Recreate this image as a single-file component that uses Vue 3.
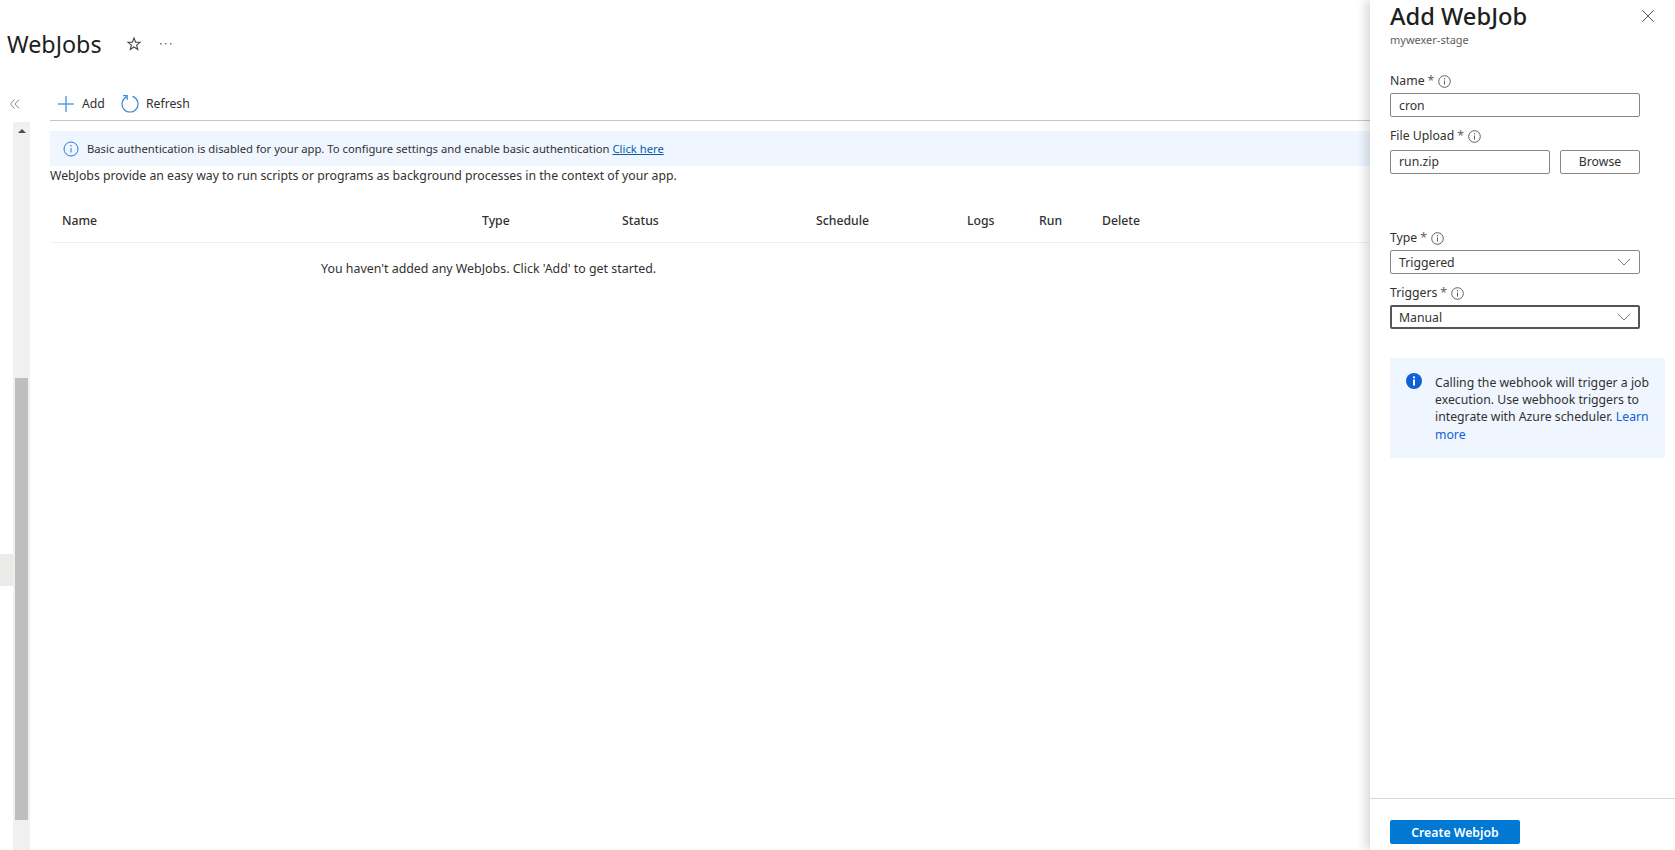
<script setup>
const columns = [
  { label: 'Name', width: '420px' },
  { label: 'Type', width: '140px' },
  { label: 'Status', width: '194px' },
  { label: 'Schedule', width: '151px' },
  { label: 'Logs', width: '72px' },
  { label: 'Run', width: '63px' },
  { label: 'Delete', width: '80px' }
]
</script>

<template>
  <div class="page">
    <div class="main">
      <header class="blade-head">
        <h1>WebJobs</h1>
        <svg class="star" width="16" height="16" viewBox="0 0 16 16" aria-hidden="true">
          <path d="M8 2l1.6 4.1 4.4.2-3.4 2.8 1.2 4.3L8 11l-3.8 2.4 1.2-4.3L2 6.3l4.4-.2z" fill="none" stroke="#444" stroke-width="1.1" />
        </svg>
        <svg class="dots" width="12" height="2" viewBox="0 0 12 2" aria-hidden="true">
          <path d="M0 0h1.500v1.500H0zM5 0h1.500v1.500H5zM10 0h1.500v1.500H10z" fill="#777" />
        </svg>
      </header>

      <div class="blade-body">
        <aside class="side">
          <div class="collapse">
            <svg width="12" height="12" viewBox="0 0 12 12" aria-hidden="true">
              <path d="M5.5 1.5L1.5 6l4 4.500M10 1.500L6 6l4 4.500" fill="none" stroke="#8a8886" stroke-width="1" />
            </svg>
          </div>
          <div class="side-row">
            <div class="side-nav"><div class="nav-selected"></div></div>
            <div class="scrollbar">
              <span class="arrow"></span>
              <div class="thumb"></div>
            </div>
          </div>
        </aside>

        <section class="content">
          <div class="toolbar">
            <button class="tool">
              <svg width="18" height="18" viewBox="0 0 18 18" aria-hidden="true">
                <path d="M9 1v16M1 9h16" stroke="#5a9fe0" stroke-width="1.500" fill="none" />
              </svg>
              Add
            </button>
            <button class="tool">
              <svg width="18" height="18" viewBox="0 0 18 18" aria-hidden="true">
                <path d="M11.500 1.400A8 8 0 1 1 6 1.600" stroke="#3f8bd6" stroke-width="1.200" fill="none" />
                <path d="M2 .7H6.200V5" stroke="#3f8bd6" stroke-width="1.200" fill="none" />
              </svg>
              Refresh
            </button>
          </div>

          <div class="banner">
            <svg width="16" height="16" viewBox="0 0 16 16" aria-hidden="true">
              <circle cx="8" cy="8" r="7" fill="none" stroke="#2f77d6" stroke-width="1" />
              <path d="M8 7v4.500" stroke="#2f77d6" stroke-width="1" />
              <circle cx="8" cy="4.800" r=".8" fill="#2f77d6" />
            </svg>
            <span>Basic authentication is disabled for your app. To configure settings and enable basic authentication <a href="#">Click here</a></span>
          </div>

          <p class="intro">WebJobs provide an easy way to run scripts or programs as background processes in the context of your app.</p>

          <div class="table-head">
            <span v-for="col in columns" :key="col.label" class="th" :style="{ width: col.width }">{{ col.label }}</span>
          </div>
          <p class="empty">You haven't added any WebJobs. Click 'Add' to get started.</p>
        </section>
      </div>
    </div>

    <aside class="panel">
      <div class="panel-body">
        <div class="panel-title">
          <h2>Add WebJob</h2>
          <svg class="close" width="14" height="14" viewBox="0 0 14 14" aria-hidden="true">
            <path d="M1 1l12 12M13 1L1 13" stroke="#555" stroke-width="1" fill="none" />
          </svg>
        </div>
        <div class="subtitle">mywexer-stage</div>

        <label class="lab lab-name">Name <span class="req">*</span>
          <svg class="tip" width="13" height="13" viewBox="0 0 13 13" aria-hidden="true">
            <circle cx="6.500" cy="6.500" r="5.800" fill="none" stroke="#605e5c" />
            <path d="M6.500 5.500v4" stroke="#605e5c" /><circle cx="6.500" cy="3.700" r=".7" fill="#605e5c" />
          </svg>
        </label>
        <div class="box">cron</div>

        <label class="lab lab-file">File Upload <span class="req">*</span>
          <svg class="tip" width="13" height="13" viewBox="0 0 13 13" aria-hidden="true">
            <circle cx="6.500" cy="6.500" r="5.800" fill="none" stroke="#605e5c" />
            <path d="M6.500 5.500v4" stroke="#605e5c" /><circle cx="6.500" cy="3.700" r=".7" fill="#605e5c" />
          </svg>
        </label>
        <div class="file-row">
          <div class="box file-name">run.zip</div>
          <button class="browse">Browse</button>
        </div>

        <label class="lab lab-type">Type <span class="req">*</span>
          <svg class="tip" width="13" height="13" viewBox="0 0 13 13" aria-hidden="true">
            <circle cx="6.500" cy="6.500" r="5.800" fill="none" stroke="#605e5c" />
            <path d="M6.500 5.500v4" stroke="#605e5c" /><circle cx="6.500" cy="3.700" r=".7" fill="#605e5c" />
          </svg>
        </label>
        <div class="box select">Triggered
          <svg width="14" height="8" viewBox="0 0 14 8" aria-hidden="true"><path d="M1 1l6 6 6-6" fill="none" stroke="#7a7876" /></svg>
        </div>

        <label class="lab lab-trig">Triggers <span class="req">*</span>
          <svg class="tip" width="13" height="13" viewBox="0 0 13 13" aria-hidden="true">
            <circle cx="6.500" cy="6.500" r="5.800" fill="none" stroke="#605e5c" />
            <path d="M6.500 5.500v4" stroke="#605e5c" /><circle cx="6.500" cy="3.700" r=".7" fill="#605e5c" />
          </svg>
        </label>
        <div class="box select focus">Manual
          <svg width="14" height="8" viewBox="0 0 14 8" aria-hidden="true"><path d="M1 1l6 6 6-6" fill="none" stroke="#7a7876" /></svg>
        </div>

        <div class="note">
          <svg width="16" height="16" viewBox="0 0 16 16" aria-hidden="true">
            <circle cx="8" cy="8" r="8" fill="#0f62d6" />
            <rect x="7" y="6.500" width="2" height="6" fill="#fff" />
            <circle cx="8" cy="4.300" r="1.150" fill="#fff" />
          </svg>
          <p>Calling the webhook will trigger a job execution. Use webhook triggers to integrate with Azure scheduler. <a href="#">Learn more</a></p>
        </div>
      </div>

      <footer class="panel-foot">
        <button class="create">Create Webjob</button>
      </footer>
    </aside>
  </div>
</template>

<style>
html, body {
  margin: 0;
  background: #fff;
}
</style>

<style scoped>
.page {
  display: flex;
  width: 1675px;
  height: 850px;
  overflow: hidden;
  font-family: "Noto Sans", "Open Sans", sans-serif;
  font-size: 12.25px;
  color: #323130;
}

.main {
  flex: 1;
  min-width: 0;
  display: flex;
  flex-direction: column;
}

.blade-head {
  height: 88px;
  display: flex;
  align-items: center;
  padding-left: 7px;
}

.blade-head h1 {
  margin: 0;
  width: 120px;
  font-size: 23.300px;
  font-weight: 400;
  color: #201f1e;
}

.star {
  margin-left: -1px;
}

.dots {
  margin-left: 18px;
}

.blade-body {
  flex: 1;
  display: flex;
  min-height: 0;
}

.side {
  width: 50px;
  flex: none;
  display: flex;
  flex-direction: column;
}

.collapse {
  height: 34px;
  padding: 9px 0 0 9px;
  box-sizing: border-box;
}

.side-row {
  flex: 1;
  display: flex;
}

.side-nav {
  width: 13px;
  padding-top: 432px;
}

.nav-selected {
  height: 32px;
  background: #edebe9;
}

.scrollbar {
  width: 17px;
  background: #f0f0f0;
  padding: 0 2px;
  box-sizing: border-box;
  display: flex;
  flex-direction: column;
  align-items: center;
}

.arrow {
  margin-top: 7px;
  border-left: 4px solid transparent;
  border-right: 4px solid transparent;
  border-bottom: 4px solid #505050;
}

.thumb {
  width: 13px;
  height: 442px;
  margin-top: 245px;
  background: #bebebe;
}

.content {
  flex: 1;
  min-width: 0;
}

.toolbar {
  height: 32px;
  display: flex;
  align-items: center;
  gap: 16px;
  padding-left: 7px;
  border-bottom: 1px solid #c8c6c4;
}

.tool {
  display: flex;
  align-items: center;
  gap: 7px;
  padding: 0 0 2px;
  border: none;
  background: none;
  font: inherit;
  color: #323130;
}

.tool svg {
  margin-top: 1px;
}

.banner {
  margin-top: 10px;
  height: 35px;
  padding-left: 13px;
  background: #eff6ff;
  display: flex;
  align-items: center;
  gap: 8px;
  font-size: 11.250px;
}

.banner a {
  color: #0b5cad;
}

.note a {
  color: #0f62d6;
  text-decoration: none;
}

.intro {
  margin: 0;
  padding-top: 1px;
  line-height: 17px;
}

.table-head {
  height: 46px;
  margin-top: 13px;
  padding: 2px 0 0 12px;
  display: flex;
  align-items: center;
  border-bottom: 1px solid #f0f0f0;
  box-sizing: border-box;
  font-weight: 500;
}

.th {
  flex: none;
}

.empty {
  margin: 17px 0 0;
  padding-left: 271px;
  line-height: 17px;
  font-size: 12.400px;
}

.panel {
  position: relative;
  z-index: 2;
  width: 305px;
  flex: none;
  display: flex;
  flex-direction: column;
  background: #fff;
  box-shadow: -4px 0 10px rgba(0, 0, 0, 0.16);
}

.panel-body {
  flex: 1;
  padding: 0 10px 0 20px;
}

.panel-title {
  display: flex;
  justify-content: space-between;
  align-items: center;
  padding-right: 10px;
  height: 31px;
}

.panel-title h2 {
  margin: 0;
  font-size: 23.700px;
  font-weight: 500;
  color: #201f1e;
}

.subtitle {
  font-size: 11px;
  line-height: 15px;
  padding-top: 1px;
  color: #605e5c;
}

.lab {
  display: flex;
  align-items: center;
  gap: 3px;
  line-height: 16px;
  color: #323130;
}

.req {
  color: #605e5c;
}

.tip {
  margin-left: 1px;
}

.lab-name {
  margin-top: 26px;
  margin-bottom: 4px;
}

.lab-file {
  margin-top: 11px;
  margin-bottom: 6px;
}

.lab-type {
  margin-top: 56px;
  margin-bottom: 4px;
}

.lab-trig {
  margin-top: 11px;
  margin-bottom: 4px;
}

.box {
  width: 250px;
  height: 24px;
  box-sizing: border-box;
  padding: 2px 8px 0;
  border: 1px solid #8a8886;
  border-radius: 2px;
  display: flex;
  align-items: center;
  line-height: 1;
}

.select {
  justify-content: space-between;
}

.select svg {
  margin-top: -2px;
}

.focus {
  border: 2px solid #555;
  padding: 2px 7px 0;
}

.file-row {
  display: flex;
  gap: 10px;
  width: 250px;
}

.file-name {
  width: 160px;
  padding-top: 0;
}

.browse {
  width: 80px;
  height: 24px;
  padding: 0 0 2px;
  background: #fff;
  border: 1px solid #8a8886;
  border-radius: 2px;
  font: inherit;
  color: #323130;
}

.note {
  margin-top: 29px;
  height: 100px;
  box-sizing: border-box;
  padding: 16px 15px 0 16px;
  background: #eff6ff;
  display: flex;
  gap: 13px;
}

.note svg {
  flex: none;
  margin-top: -1px;
}

.note p {
  margin: 0;
  line-height: 17.200px;
}

.panel-foot {
  height: 52px;
  box-sizing: border-box;
  padding: 21px 0 0 20px;
  border-top: 1px solid #d6d6d6;
}

.create {
  display: block;
  width: 130px;
  height: 24px;
  padding: 0;
  border: none;
  border-radius: 2px;
  background: #0078d4;
  color: #fff;
  font: inherit;
  font-weight: 600;
}
</style>
